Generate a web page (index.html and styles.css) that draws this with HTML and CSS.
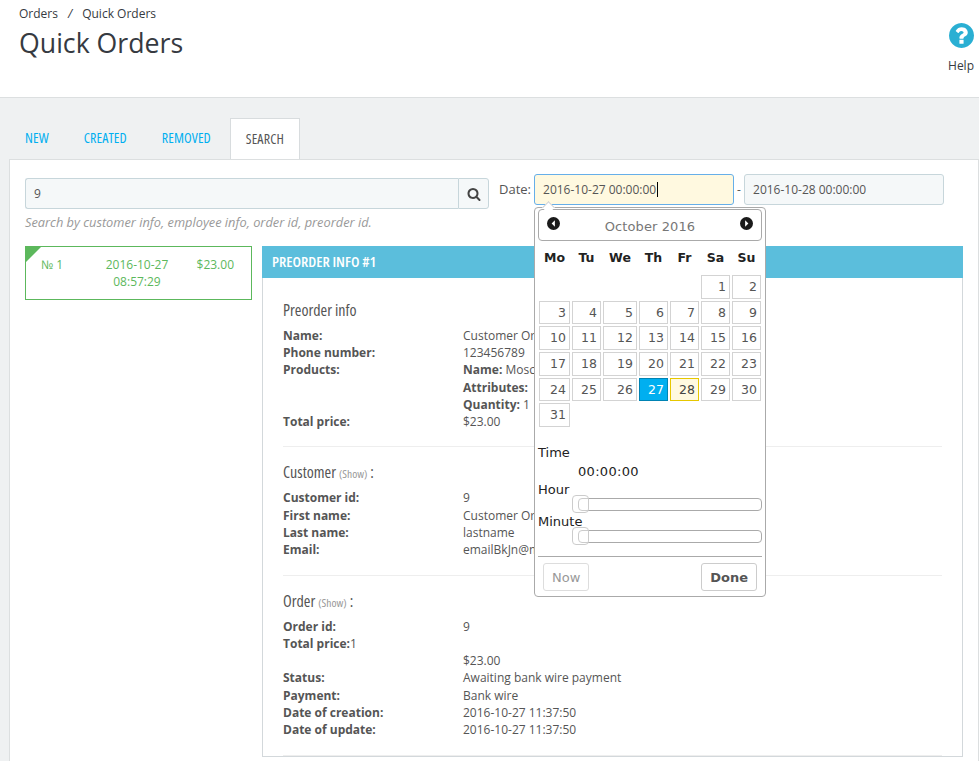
FILE: index.html
```html
<!DOCTYPE html>
<html lang="en">
<head>
    <meta charset="UTF-8">
    <title>Quick Orders</title>
    <link rel="stylesheet" href="styles.css">
</head>
<body>
    <div class="page">
        <header class="page-head">
            <div>
                <div class="crumbs"><span>Orders</span><i>/</i><span>Quick Orders</span></div>
                <h1>Quick Orders</h1>
            </div>
            <a class="help">
                <svg viewBox="128 128 1536 1536" width="25" height="25"><path fill="#2aafd3" d="M1024 1376v-192q0-14-9-23t-23-9h-192q-14 0-23 9t-9 23v192q0 14 9 23t23 9h192q14 0 23-9t9-23zm256-672q0-88-55.500-163t-138.500-116-170-41q-243 0-371 213-15 24 8 42l132 100q7 6 19 6 16 0 25-12 53-68 86-92 34-24 86-24 48 0 85.500 26t37.500 59q0 38-20 61t-68 45q-63 28-115.500 86.500t-52.500 125.500v36q0 14 9 23t23 9h192q14 0 23-9t9-23q0-19 21.500-49.500t54.500-49.500q32-18 49-28.500t46-35 44.500-48 28-60.500 12.500-81zm384 192q0 209-103 385.500t-279.500 279.500-385.500 103-385.500-103-279.500-279.500-103-385.500 103-385.500 279.500-279.500 385.500-103 385.500 103 279.500 279.500 103 385.500z"/></svg>
                <span>Help</span>
            </a>
        </header>

        <main class="content">
            <ul class="tabs">
                <li>New</li>
                <li>Created</li>
                <li>Removed</li>
                <li class="active">Search</li>
            </ul>

            <section class="tab-panel">
                <div class="filters">
                    <div class="search-col">
                        <div class="search-box">
                            <input type="text" class="field search-input" value="9">
                            <button class="search-btn">
                                <svg viewBox="0 0 1792 1792" width="14" height="14"><path fill="#444" d="M1216 832q0-185-131.500-316.500t-316.500-131.500-316.500 131.500-131.500 316.500 131.500 316.500 316.500 131.500 316.500-131.500 131.500-316.500zm512 832q0 52-38 90t-90 38q-54 0-90-38l-343-342q-179 124-399 124-143 0-273.500-55.500t-225-150-150-225-55.500-273.500 55.500-273.500 150-225 225-150 273.500-55.500 273.500 55.500 225 150 150 225 55.500 273.500q0 220-124 399l343 343q37 37 37 90z"/></svg>
                            </button>
                        </div>
                        <p class="hint">Search by customer info, employee info, order id, preorder id.</p>
                    </div>
                    <div class="dates">
                        <label>Date:</label>
                        <div class="field date-field focused">2016-10-27 00:00:00<span class="caret"></span></div>
                        <span class="dash">-</span>
                        <input type="text" class="field date-field" value="2016-10-28 00:00:00">
                    </div>
                </div>

                <div class="results">
                    <div class="order-card">
                        <span class="card-num">№ 1</span>
                        <span class="card-date">2016-10-27<br>08:57:29</span>
                        <span class="card-price">$23.00</span>
                    </div>

                    <div class="info-panel">
                        <div class="info-head">Preorder info #1</div>
                        <div class="info-body">
                            <div class="info-block first">
                                <h4>Preorder info</h4>
                                <div class="row"><b>Name:</b><span>Customer Order</span></div>
                                <div class="row"><b>Phone number:</b><span>123456789</span></div>
                                <div class="row"><b>Products:</b><span><b>Name:</b> Moscow</span></div>
                                <div class="row"><b></b><span><b>Attributes:</b></span></div>
                                <div class="row"><b></b><span><b>Quantity:</b> 1</span></div>
                                <div class="row"><b>Total price:</b><span>$23.00</span></div>
                            </div>
                            <div class="info-block">
                                <h4>Customer <small>(Show)</small> :</h4>
                                <div class="row"><b>Customer id:</b><span>9</span></div>
                                <div class="row"><b>First name:</b><span>Customer Order</span></div>
                                <div class="row"><b>Last name:</b><span>lastname</span></div>
                                <div class="row"><b>Email:</b><span>emailBkJn@mail.ru</span></div>
                            </div>
                            <div class="info-block">
                                <h4>Order <small>(Show)</small> :</h4>
                                <div class="row"><b>Order id:</b><span>9</span></div>
                                <div class="row"><b>Total price:<span class="plain">1</span></b><span></span></div>
                                <div class="row"><b></b><span>$23.00</span></div>
                                <div class="row"><b>Status:</b><span>Awaiting bank wire payment</span></div>
                                <div class="row"><b>Payment:</b><span>Bank wire</span></div>
                                <div class="row"><b>Date of creation:</b><span>2016-10-27 11:37:50</span></div>
                                <div class="row"><b>Date of update:</b><span>2016-10-27 11:37:50</span></div>
                            </div>
                        </div>
                    </div>
                </div>
            </section>
        </main>

        <div class="datepicker">
            <div class="dp-head">
                <svg class="dp-nav" viewBox="0 0 14 14" width="13" height="13"><circle cx="7" cy="7" r="7" fill="#1a1a1a"/><path d="M8.500 3.500v7L5 7z" fill="#fff"/></svg>
                <span class="dp-title">October 2016</span>
                <svg class="dp-nav" viewBox="0 0 14 14" width="13" height="13"><circle cx="7" cy="7" r="7" fill="#1a1a1a"/><path d="M5.500 3.500v7L9 7z" fill="#fff"/></svg>
            </div>
            <table class="dp-cal">
                <thead>
                    <tr><th>Mo</th><th>Tu</th><th>We</th><th>Th</th><th>Fr</th><th>Sa</th><th>Su</th></tr>
                </thead>
                <tbody>
                    <tr><td></td><td></td><td></td><td></td><td></td><td><a>1</a></td><td><a>2</a></td></tr>
                    <tr><td><a>3</a></td><td><a>4</a></td><td><a>5</a></td><td><a>6</a></td><td><a>7</a></td><td><a>8</a></td><td><a>9</a></td></tr>
                    <tr><td><a>10</a></td><td><a>11</a></td><td><a>12</a></td><td><a>13</a></td><td><a>14</a></td><td><a>15</a></td><td><a>16</a></td></tr>
                    <tr><td><a>17</a></td><td><a>18</a></td><td><a>19</a></td><td><a>20</a></td><td><a>21</a></td><td><a>22</a></td><td><a>23</a></td></tr>
                    <tr><td><a>24</a></td><td><a>25</a></td><td><a>26</a></td><td><a class="selected">27</a></td><td><a class="today">28</a></td><td><a>29</a></td><td><a>30</a></td></tr>
                    <tr><td><a>31</a></td><td></td><td></td><td></td><td></td><td></td><td></td></tr>
                </tbody>
            </table>
            <div class="dp-time">
                <div class="dp-label">Time</div>
                <div class="dp-value">00:00:00</div>
                <div class="dp-label">Hour</div>
                <div class="dp-slider"><span class="dp-handle"></span></div>
                <div class="dp-label">Minute</div>
                <div class="dp-slider"><span class="dp-handle"></span></div>
            </div>
            <div class="dp-foot">
                <button class="dp-btn now">Now</button>
                <button class="dp-btn done">Done</button>
            </div>
        </div>
    </div>
</body>
</html>
```

FILE: styles.css
```css
html,
body {
    margin: 0;
    padding: 0;
    height: 761px;
    overflow: hidden;
}

body {
    font-family: "Open Sans", sans-serif;
    font-size: 12px;
    line-height: 17.14px;
    color: #555;
    background-color: #eff1f2;
}

.page {
    position: relative;
    height: 761px;
    overflow: hidden;
}

/* header */
.page-head {
    display: flex;
    justify-content: space-between;
    height: 92px;
    padding: 5px 5px 0 19px;
    background-color: #fff;
    border-bottom: 1px solid #dcdfe0;
}

.crumbs {
    color: #363a41;
    font-size: 12px;
    line-height: 17px;
}

.crumbs i {
    font-style: italic;
    margin: 0 10px 0 10px;
}

h1 {
    margin: 3px 0 0;
    font-size: 26.7px;
    font-weight: 400;
    line-height: 36px;
    color: #363a41;
}

.help {
    display: flex;
    flex-direction: column;
    align-items: center;
    margin-top: 18px;
    color: #363a41;
    font-size: 12px;
}

.help svg {
    display: block;
    margin-bottom: 9px;
}

/* tabs */
.content {
    padding: 20px 0 0 9px;
}

.tabs {
    display: flex;
    margin: 0;
    padding: 0 0 0 1px;
    list-style: none;
}

.tabs li {
    box-sizing: border-box;
    height: 41px;
    padding: 0 15px;
    margin-right: 5px;
    font-family: "Open Sans", sans-serif;
    font-stretch: 75%;
    font-size: 14px;
    letter-spacing: 0.1px;
    line-height: 40px;
    text-transform: uppercase;
    color: #00aff0;
}

.tabs li.active {
    position: relative;
    z-index: 1;
    margin-left: -1px;
    margin-bottom: -1px;
    padding: 0 15px;
    color: #555;
    background-color: #fff;
    border: 1px solid #d8dcde;
    border-bottom: 0;
}

.tab-panel {
    height: 800px;
    padding: 18px 15px 0 15px;
    background-color: #fff;
    border: 1px solid #dcdfe0;
}

/* filters */
.filters {
    display: flex;
    align-items: flex-start;
}

.search-col {
    width: 464px;
    margin-right: 10px;
}

.search-box {
    display: flex;
    height: 31px;
}

.field {
    box-sizing: border-box;
    padding: 0 8px;
    font-family: "Open Sans", sans-serif;
    font-size: 12px;
    color: #555;
    background-color: #f5f8f9;
    border: 1px solid #c7d6db;
    border-radius: 3px;
    outline: none;
}

.search-input {
    flex: 1;
    min-width: 0;
    border-right: 0;
    border-radius: 3px 0 0 3px;
}

.search-btn {
    display: flex;
    align-items: center;
    justify-content: center;
    width: 31px;
    padding: 0;
    background-color: #f5f8f9;
    border: 1px solid #c7d6db;
    border-radius: 0 3px 3px 0;
}

.hint {
    margin: 5px 0 0;
    font-size: 12.8px;
    font-style: italic;
    color: #999;
}

.dates {
    display: flex;
    align-items: center;
    margin-top: -4px;
}

.dates label {
    margin-right: 3px;
    font-size: 13px;
}

.date-field {
    width: 200px;
    height: 31px;
    line-height: 29px;
}

.date-field.focused {
    background-color: #fff9e0;
    border-color: #66afe9;
}

.caret {
    display: inline-block;
    width: 1px;
    height: 15px;
    margin-left: 1px;
    vertical-align: -3px;
    background-color: #000;
}

.dash {
    width: 10px;
    text-align: center;
}

/* results */
.results {
    display: flex;
    align-items: flex-start;
    margin-top: 15px;
}

.order-card {
    position: relative;
    display: flex;
    box-sizing: border-box;
    width: 227px;
    height: 54px;
    padding: 9px 17px 0 15px;
    margin-right: 10px;
    color: #5cb85c;
    border: 1px solid #5cb85c;
}

.order-card::before {
    content: "";
    position: absolute;
    top: 0;
    left: 0;
    border-top: 15px solid #5cb85c;
    border-right: 15px solid transparent;
}

.card-num {
    flex: 0 0 48px;
}

.card-date {
    flex: 0 0 96px;
    text-align: center;
}

.card-price {
    margin-left: auto;
    text-align: right;
}

.info-panel {
    width: 701px;
}

.info-head {
    height: 32px;
    padding-left: 10px;
    font-family: "Open Sans", sans-serif;
    font-stretch: 75%;
    font-size: 15px;
    font-weight: 600;
    line-height: 31px;
    text-transform: uppercase;
    color: #fff;
    background-color: #5bbedc;
}

.info-body {
    padding: 6px 20px 0;
    border: 1px solid #d3d8db;
    border-top: 0;
}

.info-block {
    padding: 15px 0 16.5px;
    border-bottom: 1px solid #eee;
}

.info-block.first {
    padding: 16px 0 16px;
}

.info-block h4 {
    height: 20px;
    margin: 0 0 7.5px;
    font-family: "Open Sans", sans-serif;
    font-stretch: 75%;
    font-size: 16px;
    font-weight: 400;
    line-height: 20px;
    color: #555;
}

.info-block.first h4 {
    margin-bottom: 7px;
}

.info-block small {
    font-size: 11.500px;
    color: #999;
}

.row {
    display: flex;
}

.row > b {
    flex: 0 0 180px;
}

.plain {
    font-weight: 400;
}

/* datepicker popup */
.datepicker {
    position: absolute;
    left: 534px;
    top: 207px;
    z-index: 5;
    box-sizing: border-box;
    width: 232px;
    height: 390px;
    padding: 1px 3px;
    font-family: "DejaVu Sans", sans-serif;
    font-size: 13px;
    color: #222;
    background-color: #fff;
    border: 1px solid #aaa;
    border-radius: 4px;
}

.datepicker::before {
    content: "";
    position: absolute;
    left: 9px;
    top: -5px;
    width: 8px;
    height: 8px;
    background-color: #fff;
    border-top: 1px solid #d0d0d0;
    border-left: 1px solid #d0d0d0;
    transform: rotate(45deg);
}

.dp-head {
    display: flex;
    align-items: center;
    justify-content: space-between;
    box-sizing: border-box;
    height: 32px;
    padding: 0 8px;
    border: 1px solid #aaa;
    border-radius: 4px;
}

.dp-nav {
    margin-top: -3px;
}

.dp-title {
    margin-top: 3px;
    font-size: 13px;
    letter-spacing: 0.1px;
    color: #777;
}

.dp-cal {
    width: 224px;
    margin-top: 1px;
    border-spacing: 0;
    border-collapse: separate;
    table-layout: fixed;
}

.dp-cal th {
    height: 32px;
    padding: 0;
    font-size: 12.5px;
    color: #222;
}

.dp-cal th:nth-child(1) {
    width: 33px;
}

.dp-cal th:nth-child(3) {
    width: 36px;
}

.dp-cal td {
    padding: 1px;
}

.dp-cal a {
    display: block;
    box-sizing: border-box;
    height: 23.7px;
    padding-right: 3px;
    font-size: 12.5px;
    line-height: 22px;
    text-align: right;
    color: #555;
    border: 1px solid #d3d3d3;
}

.dp-cal a.selected {
    color: #fff;
    background-color: #00aff0;
    border-color: #0083b3;
}

.dp-cal a.today {
    color: #444;
    background-color: #fff9e0;
    border-color: #e6c700;
}

.dp-time {
    margin-top: 17px;
}

.dp-label {
    height: 16px;
    line-height: 16px;
}

.dp-value {
    margin: 3px 0 2px 40px;
    letter-spacing: 0.3px;
    line-height: 16px;
}

.dp-slider {
    position: relative;
    box-sizing: border-box;
    height: 13px;
    margin: 0 0 3px 40px;
    border: 1px solid #aaa;
    border-radius: 4px;
}

.dp-handle {
    position: absolute;
    left: -7px;
    top: -4px;
    box-sizing: border-box;
    width: 17px;
    height: 18px;
    background-color: rgba(255, 255, 255, 0.4);
    border: 1px solid #ccc;
    border-radius: 4px;
}

.dp-foot {
    display: flex;
    justify-content: space-between;
    margin-top: 13px;
    padding: 6px 5px 0;
    border-top: 1px solid #aaa;
}

.dp-btn {
    height: 28px;
    padding: 0 8px;
    font-family: "DejaVu Sans", sans-serif;
    font-size: 13px;
    color: #555;
    background-color: #fff;
    border: 1px solid #ccc;
    border-radius: 3px;
}

.dp-btn.now {
    color: #999;
    border-color: #ddd;
}

.dp-btn.done {
    font-weight: 700;
}
```
